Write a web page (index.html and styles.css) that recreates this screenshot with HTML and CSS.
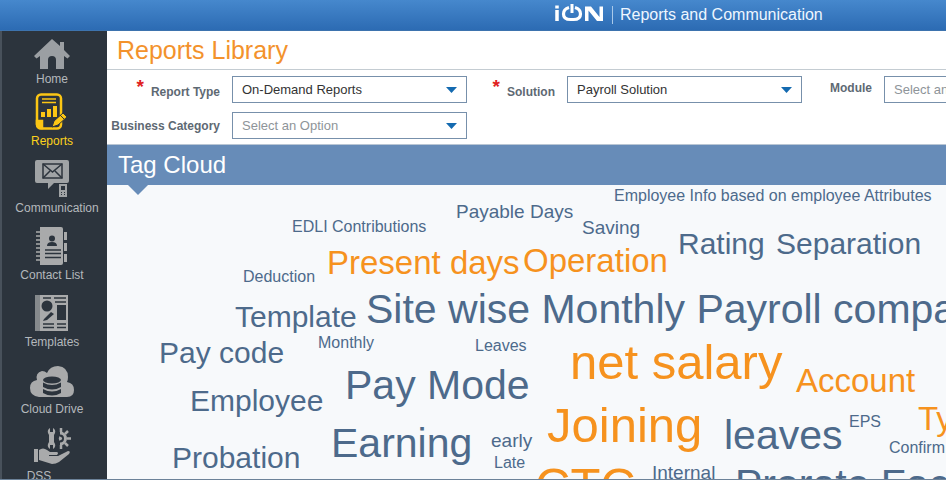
FILE: index.html
```html
<!DOCTYPE html>
<html lang="en">
<head>
<meta charset="utf-8">
<title>Reports and Communication</title>
<link rel="stylesheet" href="styles.css">
</head>
<body>
<header class="topbar">
  <svg class="logo" viewBox="0 0 50 20" width="50" height="20" role="img" aria-label="iON" fill="none" stroke="#fff" stroke-width="3.500">
    <path d="M3 7v11M3 2.500v3"/>
    <path d="M15 4.500Q9.500 6 9.500 11q0 5.500 7 5.500h3q7 0 7-5.500 0-5-5.500-6.500" stroke-width="3.200"/>
    <path d="M18 1v9" stroke-width="3"/>
    <path d="M31 18V3.500h6L45.500 14V3.500H49V18h-6L34.500 7.500V18Z" fill="#fff" stroke="none"/>
  </svg>
  <span class="app-name">Reports and Communication</span>
</header>
<div class="shell">
  <nav class="sidebar">
    <a class="nav-item" href="#home">
      <span class="icon"><svg viewBox="0 0 38 30" width="38" height="30" fill="#9b9fa3"><path d="M19 0 1 17l2.500 2.500L7 17v13h8v-9q0-4 4-4t4 4v9h8V17l3.500 2.500L37 17l-6-6V3h-4v4z"/></svg></span>
      <span>Home</span>
    </a>
    <a class="nav-item active" href="#reports">
      <span class="icon"><svg viewBox="0 0 36 38" width="36" height="38" fill="none" stroke="#fcc614" stroke-width="2.500">
        <rect x="3" y="1.500" width="24" height="34" rx="4"/>
        <path d="M8 6h14M8 9.500h14" stroke-width="1.500"/>
        <path d="M7 24v-5h4v5zM13 24v-8h4v8zM19 24V13h4v11z" fill="#fcc614" stroke="none"/>
        <path d="M3 28h5v7H6q-3-1-3-4z" fill="#fcc614"/>
        <path d="m18 34 2-6 9-8 4 4-9 8z" fill="#fcc614" stroke="#2c343d" stroke-width="1"/>
        <path d="m26 22 4 4" stroke="#2c343d" stroke-width="1"/>
      </svg></span>
      <span>Reports</span>
    </a>
    <a class="nav-item wide" href="#communication">
      <span class="icon"><svg viewBox="0 0 36 38" width="36" height="38" fill="#a0a3a5">
        <path d="M3 0h30q2 0 2 2v19q0 2-2 2H20l-6 6v-6H3q-2 0-2-2V2q0-2 2-2z"/>
        <g fill="none" stroke="#2c343d" stroke-width="1.500"><path d="M9 4h19v14H9z"/><path d="m9 4 9.500 8L28 4M9 18l7-7M28 18l-7-7"/></g>
        <path d="M25 24h8v13h-8z"/><path d="M27 26h4v4h-4zM27 32h1v1h-1zM30 32h1v1h-1zM27 34h1v1h-1zM30 34h1v1h-1z" fill="#2c343d"/>
      </svg></span>
      <span class="label">Communication</span>
    </a>
    <a class="nav-item" href="#contacts">
      <span class="icon"><svg viewBox="0 0 36 38" width="36" height="38" fill="#a9aaab">
        <path d="M6 0h21q2 0 2 2v34q0 2-2 2H6z"/>
        <path d="M2 5h6M2 9h6M2 13h6M2 17h6M2 21h6M2 25h6M2 29h6M2 33h6" stroke="#a9aaab" stroke-width="1.500"/>
        <path d="M30 5h3v8h-3zM30 16h3v8h-3zM30 27h3v8h-3z"/>
        <circle cx="18" cy="11.500" r="3" fill="#2c343d"/><path d="M13 19q0-4 5-4t5 4z" fill="#2c343d"/>
        <path d="M11 23h16M11 26.500h16M11 30.500h16" stroke="#2c343d" stroke-width="1.500"/>
      </svg></span>
      <span>Contact List</span>
    </a>
    <a class="nav-item" href="#templates">
      <span class="icon"><svg viewBox="0 0 36 38" width="36" height="38">
        <path d="M1 1h5v36H1z" fill="#85898c"/><path d="M6 1h28v36H6z" fill="#a9aaab"/>
        <g fill="#2c343d"><circle cx="13" cy="12" r="5.500"/><path d="M23 11h9v15h-9zM10 25l7-7 3 2-7 6-4 1z"/></g>
        <path d="M9 4h8M20 4h12M21 8h11M9 30h11M23 30h9M9 33.500h11M23 33.500h9" stroke="#2c343d" stroke-width="1.500"/>
      </svg></span>
      <span>Templates</span>
    </a>
    <a class="nav-item" href="#cloud">
      <span class="icon"><svg viewBox="0 0 46 34" width="46" height="34">
        <path d="M10 32Q1 31 1 23q0-7 7-8Q6 8 13 6q3 0 5 2Q21 1 29 1q10 1 10 11 0 3-1 5 7 1 7 8 0 7-7 7z" fill="#a9aaab"/>
        <g fill="#2c343d"><ellipse cx="23" cy="15" rx="9" ry="3.500"/><path d="M14 17.500q9 5 18 0V22q-9 5-18 0zM14 24q9 5 18 0v4q-9 5-18 0z"/></g>
      </svg></span>
      <span>Cloud Drive</span>
    </a>
    <a class="nav-item short" href="#dss">
      <span class="icon"><svg viewBox="0 0 40 38" width="40" height="38" fill="#a9aaab">
        <path d="M2 21h4v13H2zM7 22q4-3 8 0l3 2h7q2 1 0 3h-8v1h9l10-5q3 0 1 3L27 34q-3 2-7 2L7 32z"/>
        <path d="M18 0v4h3V0q3 2 2 5l-1 2v7l1 2q1 3-2 5v-4h-3v4q-3-2-2-5l1-2V7l-1-2q-1-3 2-5z"/>
        <path d="M28 5a5.500 5.500 0 0 1 0 11" fill="none" stroke="#a9aaab" stroke-width="3"/>
        <path d="M27 9.500q4 1 0 2M29 4V0M33 6l3-3M35 10.500h4M33 15l3 3M29 17v4" fill="none" stroke="#a9aaab" stroke-width="2.500"/>
      </svg></span>
      <span class="label">DSS</span>
    </a>
  </nav>
  <main class="content">
    <h1 class="page-title">Reports Library</h1>
    <form class="filters">
      <div class="field">
        <label for="type"><b class="req">*</b>Report Type</label>
        <select id="type"><option>On-Demand Reports</option></select>
      </div>
      <div class="field">
        <label for="solution"><b class="req">*</b>Solution</label>
        <select id="solution"><option>Payroll Solution</option></select>
      </div>
      <div class="field last">
        <label for="module">Module</label>
        <select id="module" class="empty"><option>Select an Option</option></select>
      </div>
      <div class="field">
        <label for="category">Business Category</label>
        <select id="category" class="empty"><option>Select an Option</option></select>
      </div>
    </form>
    <h2 class="section-title">Tag Cloud</h2>
    <div class="cloud">
      <a href="#t" class="tag xs t-info">Employee Info based on employee Attributes</a>
      <a href="#t" class="tag sm t-payable">Payable Days</a>
      <a href="#t" class="tag xs t-edli">EDLI Contributions</a>
      <a href="#t" class="tag sm t-saving">Saving</a>
      <a href="#t" class="tag md t-rating">Rating</a>
      <a href="#t" class="tag md t-separation">Separation</a>
      <a href="#t" class="tag lg hot t-present">Present days</a>
      <a href="#t" class="tag lg hot t-operation">Operation</a>
      <a href="#t" class="tag xs t-deduction">Deduction</a>
      <a href="#t" class="tag md t-template">Template</a>
      <a href="#t" class="tag xl t-site">Site wise Monthly Payroll compa</a>
      <a href="#t" class="tag md t-paycode">Pay code</a>
      <a href="#t" class="tag xs t-monthly">Monthly</a>
      <a href="#t" class="tag xs t-leaves">Leaves</a>
      <a href="#t" class="tag xxl hot t-net">net salary</a>
      <a href="#t" class="tag lg hot t-account">Account</a>
      <a href="#t" class="tag xl t-paymode">Pay Mode</a>
      <a href="#t" class="tag md t-employee">Employee</a>
      <a href="#t" class="tag xl t-earning">Earning</a>
      <a href="#t" class="tag sm t-early">early</a>
      <a href="#t" class="tag xs t-late">Late</a>
      <a href="#t" class="tag xxl hot t-joining">Joining</a>
      <a href="#t" class="tag xl t-leaves2">leaves</a>
      <a href="#t" class="tag xs t-eps">EPS</a>
      <a href="#t" class="tag lg hot t-type">Ty</a>
      <a href="#t" class="tag xs t-confirm">Confirm</a>
      <a href="#t" class="tag md t-probation">Probation</a>
      <a href="#t" class="tag xxl hot t-ctc">CTC</a>
      <a href="#t" class="tag sm t-internal">Internal</a>
      <a href="#t" class="tag xl t-prorate">Prorate Fac</a>
    </div>
  </main>
</div>
</body>
</html>
```

FILE: styles.css
```css
* { box-sizing: border-box; }

body {
  margin: 0;
  height: 100vh;
  display: flex;
  flex-direction: column;
  overflow: hidden;
  font-family: "Liberation Sans", Arial, sans-serif;
  border-bottom: 1px solid #6c8299;
  background: #fff;
}

a { text-decoration: none; }

.topbar {
  flex: none;
  height: 31px;
  display: flex;
  align-items: center;
  padding-left: 554px;
  background: linear-gradient(#4688cd, #2c6bb3);
  border-bottom: 1px solid #3d73ae;
}

.logo { margin-bottom: 4px; }

.app-name {
  margin-left: 8px;
  padding-left: 7px;
  border-left: 1px solid #a9c9ea;
  color: #eef6ff;
  font-size: 16px;
  line-height: 18px;
  white-space: nowrap;
}

.shell {
  flex: 1;
  min-height: 0;
  display: flex;
}

.sidebar {
  flex: none;
  width: 107px;
  padding: 0 9px 0 4px;
  display: flex;
  flex-direction: column;
  gap: 12px;
  overflow: hidden;
  background: #2c343d;
  border-left: 2px solid #48515b;
}

.nav-item {
  flex: none;
  display: flex;
  flex-direction: column;
  align-items: center;
  gap: 3px;
  color: #b4b8bc;
  font-size: 12px;
  line-height: 14px;
  white-space: nowrap;
}

.nav-item.active {
  margin-top: -5px;
  color: #fcd21c;
}

.nav-item.wide .label { padding-left: 10px; }
.nav-item.short .label { padding-right: 26px; }

.icon {
  height: 38px;
  display: flex;
  align-items: flex-end;
}

.content {
  flex: 1;
  min-width: 0;
  display: flex;
  flex-direction: column;
}

.page-title {
  margin: 0;
  padding: 0 10px;
  border-bottom: 1px solid #c4ccd2;
  color: #f3922c;
  font-size: 25px;
  font-weight: 400;
  line-height: 38px;
}

.filters {
  display: grid;
  grid-template-columns: 360px 335px minmax(0, 1fr);
  gap: 9px 0;
  padding: 6px 0 5px;
  border-bottom: 1px solid #b9c6d4;
}

.field {
  display: flex;
  align-items: center;
  justify-content: flex-end;
  gap: 12px;
  height: 27px;
}

.field.last {
  justify-content: flex-start;
  padding-left: 28px;
  overflow: hidden;
}

.field.last label { padding-bottom: 4px; }

.field label {
  color: #5e6973;
  font-size: 12px;
  font-weight: 700;
  white-space: nowrap;
}

.req {
  margin-right: 7px;
  color: #e02020;
  font-size: 19px;
  line-height: 12px;
  vertical-align: 3px;
}

.field select {
  flex: none;
  width: 235px;
  height: 27px;
  padding: 0 9px;
  appearance: none;
  border: 1px solid #7790ab;
  border-radius: 0;
  background: #fff url("data:image/svg+xml,%3Csvg xmlns='http://www.w3.org/2000/svg' width='11' height='6'%3E%3Cpath d='M0 0h11L5.500 6z' fill='%23146ab0'/%3E%3C/svg%3E") no-repeat right 9px center;
  color: #333;
  font-family: inherit;
  font-size: 13px;
}

.field select.empty { color: #8e9499; }

.section-title {
  position: relative;
  margin: 0;
  padding: 0 11px;
  background: #678cb8;
  color: #fff;
  font-size: 24px;
  font-weight: 400;
  line-height: 40px;
}

.section-title::after {
  content: "";
  position: absolute;
  z-index: 1;
  top: 100%;
  left: 21px;
  border: 10px solid transparent;
  border-top-color: #678cb8;
  border-bottom-width: 0;
}

.cloud {
  position: relative;
  flex: 1;
  overflow: hidden;
  background: #f7f9fb;
}

/* Each tag's top is its text baseline. */
.tag {
  position: absolute;
  margin-top: calc(1px - 0.85em);
  margin-left: 2px;
  color: #4d6a8b;
  line-height: 1;
  white-space: nowrap;
}

.hot { color: #f6921e; }
.xs { font-size: 16px; }
.sm { font-size: 19px; }
.md { font-size: 30px; }
.lg { font-size: 33px; }
.xl { font-size: 41px; }
.xxl { font-size: 49px; }

.t-info { left: 505px; top: 16px; }
.t-payable { left: 347px; top: 32px; }
.t-edli { left: 183px; top: 47px; }
.t-saving { left: 473px; top: 48px; }
.t-rating { left: 569px; top: 68px; }
.t-separation { left: 667px; top: 68px; }
.t-present { left: 218px; top: 88px; }
.t-operation { left: 414px; top: 86px; }
.t-deduction { left: 134px; top: 97px; }
.t-template { left: 126px; top: 141px; }
.t-site { left: 257px; top: 138px; }
.t-paycode { left: 50px; top: 177px; }
.t-monthly { left: 209px; top: 163px; }
.t-leaves { left: 366px; top: 166px; }
.t-net { left: 461px; top: 194px; }
.t-account { left: 687px; top: 206px; }
.t-paymode { left: 236px; top: 214px; }
.t-employee { left: 81px; top: 225px; }
.t-earning { left: 222px; top: 272px; }
.t-early { left: 382px; top: 261px; }
.t-late { left: 385px; top: 283px; }
.t-joining { left: 438px; top: 257px; }
.t-leaves2 { left: 615px; top: 264px; }
.t-eps { left: 740px; top: 242px; }
.t-type { left: 809px; top: 244px; }
.t-confirm { left: 780px; top: 268px; }
.t-probation { left: 63px; top: 282px; }
.t-ctc { left: 426px; top: 317px; }
.t-internal { left: 543px; top: 293px; }
.t-prorate { left: 626px; top: 313px; }
```
